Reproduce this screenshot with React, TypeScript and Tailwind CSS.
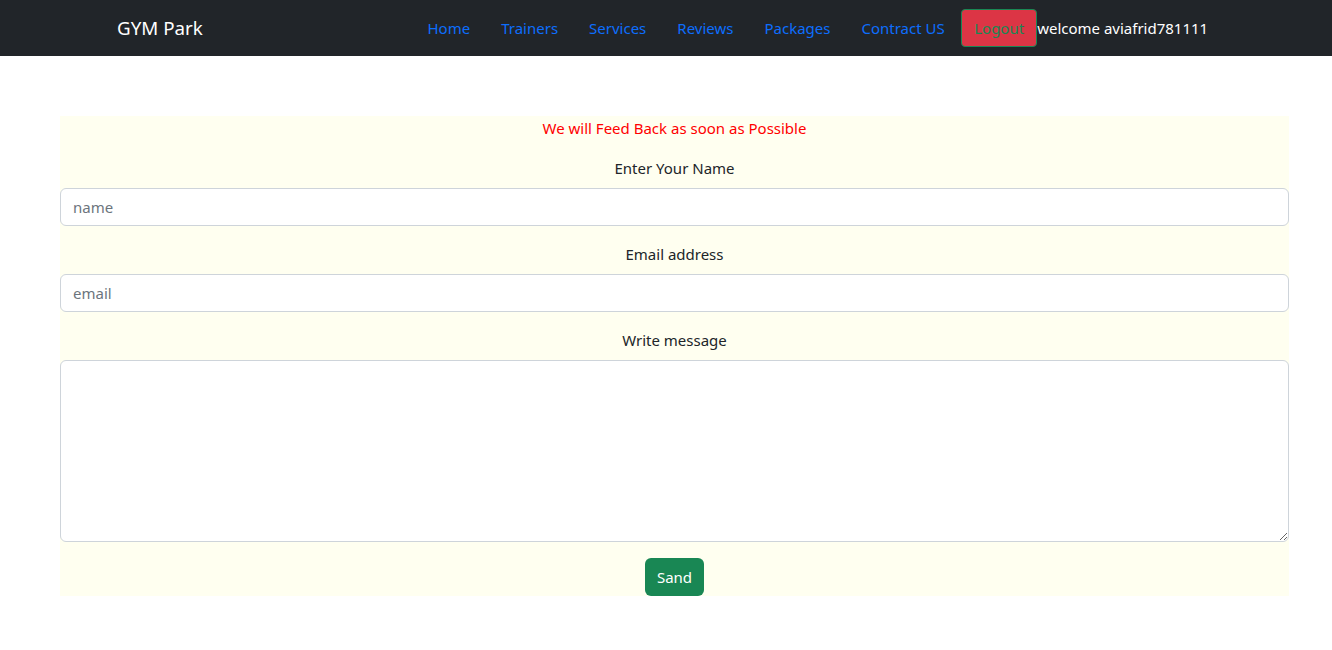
const links = ["Home", "Trainers", "Services", "Reviews", "Packages", "Contract US"];

const App = () => {
  return (
    <div className="min-h-screen bg-white text-[15px] leading-6 text-[#212529] font-['Noto_Sans',sans-serif]">
      {/* Navbar */}
      <nav className="h-14 bg-[#212529] flex items-center">
        <div className="w-[412px] pl-[117px] shrink-0">
          <span className="text-[18.75px] leading-[30px] text-white">GYM Park</span>
        </div>
        <div className="flex items-center">
          {links.map(l => (
            <a key={l} href="#" className="px-[15.5px] py-2 text-[#0d6efd]">
              {l}
            </a>
          ))}
          <button className="ml-px h-[38px] px-3 rounded-[4px] border border-[#198754] bg-[#dc3545] text-[#198754]">
            Logout
          </button>
          <span className="text-white">welcome aviafrid781111</span>
        </div>
      </nav>

      {/* Feedback form */}
      <div className="pl-[60px] pr-[43px] pt-[60px]">
        <form className="bg-[#fffff0] flex flex-col items-center">
          <p className="text-[#ff0000] mb-4">We will Feed Back as soon as Possible</p>

          <label className="mb-2">Enter Your Name</label>
          <input
            type="text"
            placeholder="name"
            className="w-full h-[38px] px-3 bg-white border border-[#ced4da] rounded-[6px] placeholder:text-[#6c757d] outline-none mb-4"
          />

          <label className="mb-2">Email address</label>
          <input
            type="email"
            placeholder="email"
            className="w-full h-[38px] px-3 bg-white border border-[#ced4da] rounded-[6px] placeholder:text-[#6c757d] outline-none mb-4"
          />

          <label className="mb-2">Write message</label>
          <textarea
            className="w-full h-[182px] px-3 py-1.5 bg-white border border-[#ced4da] rounded-[6px] outline-none mb-4 block"
          />

          <button type="button" className="h-[38px] px-3 rounded-[6px] bg-[#198754] text-white">
            Sand
          </button>
        </form>
      </div>
    </div>
  );
};

export default App;
